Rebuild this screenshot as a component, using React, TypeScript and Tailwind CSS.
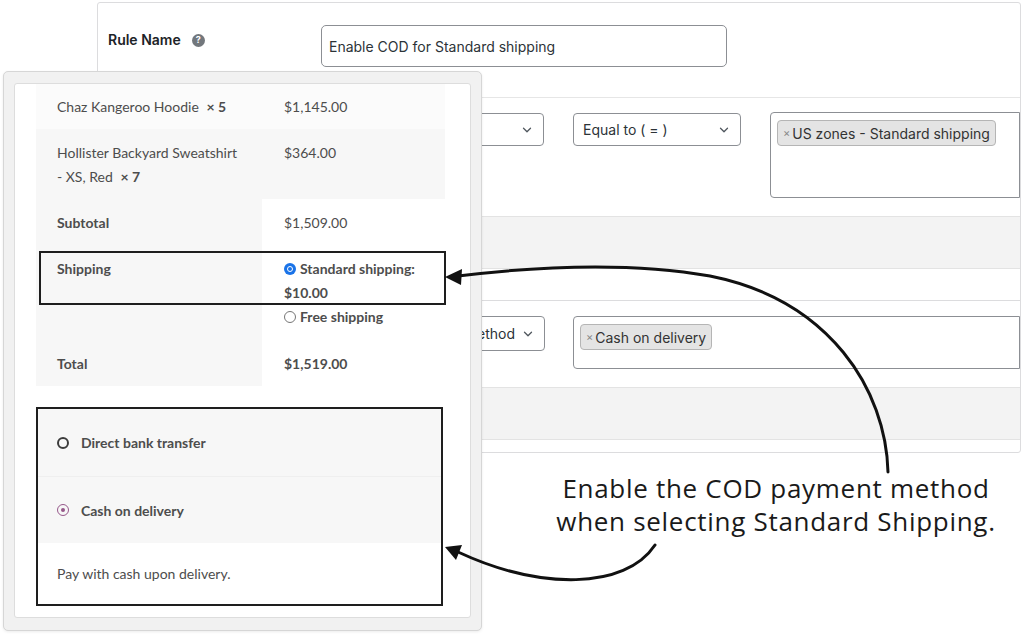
import React from "react";

const admin = { fontFamily: "Inter, 'Liberation Sans', sans-serif" };
const shop = { fontFamily: "Lato, 'Noto Sans', sans-serif" };

function Chevron() {
  return (
    <svg width="14" height="14" viewBox="0 0 24 24" fill="none" stroke="#50575e" strokeWidth="2.2" strokeLinecap="round" strokeLinejoin="round">
      <path d="M6 9l6 6 6-6" />
    </svg>
  );
}

function Select({ label, className, end }: { label: string; className: string; end?: boolean }) {
  return (
    <div className={`h-[33px] border border-[#8c8f94] rounded-[4px] bg-white flex items-center pl-[9px] pr-[9px] text-[14px] text-[#2c3338] ${end ? "justify-end gap-[6px]" : "justify-between"} ${className}`}>
      <span className="whitespace-nowrap">{label}</span>
      <Chevron />
    </div>
  );
}

function Tag({ label }: { label: string }) {
  return (
    <div className="inline-flex items-center h-[26px] px-[5px] bg-[#e4e4e4] border border-[#b5b5b5] rounded-[4px] text-[14px] text-[#333]">
      <span className="text-[11px] text-[#888] mr-[2px]">×</span>
      {label}
    </div>
  );
}

export default function App() {
  return (
    <div className="relative w-[1024px] h-[634px] bg-white overflow-hidden">
      {/* Background admin panel */}
      <div className="pt-[2px] pl-[97px]" style={admin}>
        <div className="w-[924px] h-[451px] border border-[#dcdcde] rounded-[3px] flex flex-col bg-white">
          {/* Rule name row */}
          <div className="h-[95px] flex items-start pt-[22px] pl-[10px] border-b border-[#e6e6e6]">
            <div className="w-[213px] mt-[6px] flex items-center gap-[11px] text-[14px] leading-[18px] font-semibold text-[#1d2327]">
              Rule Name
              <span className="w-[13px] h-[13px] rounded-full bg-[#72777c] text-white text-[9px] font-bold flex items-center justify-center">?</span>
            </div>
            <div className="w-[406px] h-[42px] border border-[#8c8f94] rounded-[5px] flex items-center pl-[7px] text-[14px] text-[#2c3338]">
              Enable COD for Standard shipping
            </div>
          </div>
          {/* Condition row */}
          <div className="h-[118px] flex items-start pt-[15px] pl-[246px]">
            <Select label="Shipping method" className="w-[200px]" />
            <Select label="Equal to ( = )" className="w-[168px] ml-[29px]" />
            <div className="flex-1 h-[86px] -mt-[1px] ml-[29px] border border-[#8c8f94] rounded-l-[4px] pt-[6px] pl-[6px]">
              <Tag label="US zones - Standard shipping" />
            </div>
          </div>
          <div className="h-[53px] bg-[#f3f3f3] border-y border-[#e3e3e3]" />
          <div className="h-[32px] border-b border-[#dcdcde]" />
          {/* Payment row */}
          <div className="h-[86px] flex items-start pt-[15px] pl-[266px]">
            <Select label="Payment method" className="w-[181px] h-[35px]" end />
            <div className="flex-1 h-[53px] ml-[28px] border border-[#8c8f94] rounded-l-[4px] pt-[6px] pl-[6px]">
              <Tag label="Cash on delivery" />
            </div>
          </div>
          <div className="h-[53px] bg-[#f3f3f3] border-y border-[#e3e3e3]" />
          <div className="flex-1" />
        </div>
      </div>

      {/* Checkout overlay card */}
      <div className="absolute left-[3px] top-[71px] w-[479px] h-[560px] bg-[#f1f1f1] border border-[#d6d6d6] rounded-[5px] shadow-[0_1px_3px_rgba(0,0,0,0.08)] pt-[11px] pl-[10px] pr-[10px] pb-[12px] flex" style={shop}>
        <div className="flex-1 bg-white border border-[#dddddd] rounded-[3px] overflow-hidden pl-[21px] text-[14px] text-[#4d4d4d]">
          <div className="w-[409px]">
            <div className="h-[45px] bg-[#fbfbfb] flex items-center">
              <div className="w-[226px] pl-[21px]">
                Chaz Kangeroo Hoodie <span className="font-bold ml-[4px]">× 5</span>
              </div>
              <div className="pl-[22px]">$1,145.00</div>
            </div>
            <div className="h-[70px] bg-[#f7f7f7] flex items-start pt-[12px] leading-6">
              <div className="w-[226px] pl-[21px]">
                <div>Hollister Backyard Sweatshirt</div>
                <div>
                  - XS, Red <span className="font-bold ml-[4px]">× 7</span>
                </div>
              </div>
              <div className="pl-[22px]">$364.00</div>
            </div>
            <div className="h-[47px] flex">
              <div className="w-[226px] pl-[21px] bg-[#f7f7f7] flex items-center font-bold">Subtotal</div>
              <div className="pl-[22px] flex items-center">$1,509.00</div>
            </div>
            <div className="h-[94px] flex leading-6">
              <div className="w-[226px] pl-[21px] pt-[11px] bg-[#f7f7f7] font-bold">Shipping</div>
              <div className="pl-[22px] pt-[11px] pr-[10px] font-bold flex-1">
                <div>
                  <span className="inline-block align-[-1px] w-[12px] h-[12px] rounded-full bg-[#1a73e8] mr-[4px] relative">
                    <span className="absolute left-[3px] top-[3px] w-[6px] h-[6px] rounded-full border-[1.5px] border-white" />
                  </span>
                  Standard shipping: $10.00
                </div>
                <div>
                  <span className="inline-block align-[-1px] w-[12px] h-[12px] rounded-full border border-[#767676] bg-white mr-[4px]" />
                  Free shipping
                </div>
              </div>
            </div>
            <div className="h-[46px] flex font-bold">
              <div className="w-[226px] pl-[21px] bg-[#f7f7f7] flex items-center">Total</div>
              <div className="pl-[22px] flex items-center">$1,519.00</div>
            </div>
          </div>

          {/* Payment methods */}
          <div className="mt-[21px] w-[407px] h-[199px] border-[2px] border-[#1e1e1e] flex flex-col">
            <div className="h-[68px] bg-[#f7f7f7] border-b border-[#efefef] flex items-center pl-[19px] font-bold">
              <span className="w-[12px] h-[12px] rounded-full border-[2px] border-[#3c3c3c] mr-[12px]" />
              Direct bank transfer
            </div>
            <div className="h-[66px] bg-[#f7f7f7] flex items-center pl-[19px] font-bold">
              <span className="w-[12px] h-[12px] rounded-full border-[1.5px] border-[#96588a] mr-[12px] flex items-center justify-center">
                <span className="w-[4px] h-[4px] rounded-full bg-[#96588a]" />
              </span>
              Cash on delivery
            </div>
            <div className="flex-1 flex items-center pl-[19px]">Pay with cash upon delivery.</div>
          </div>
        </div>

        {/* Shipping highlight box */}
        <div className="absolute left-[35px] top-[179px] w-[407px] h-[54px] border-[2px] border-[#1e1e1e]" />
      </div>

      {/* Annotation text */}
      <div className="absolute left-[536px] top-[472px] w-[480px] text-center text-[26px] tracking-[0.7px] leading-[33px] text-[#1a1a1a]" style={{ fontFamily: "'Open Sans', sans-serif" }}>
        Enable the COD payment method
        <br />
        when selecting Standard Shipping.
      </div>

      {/* Arrows */}
      <svg className="absolute inset-0 pointer-events-none" width="1024" height="634" viewBox="0 0 1024 634">
        <path d="M 888 472 C 886 390, 830 300, 710 276 C 630 262, 540 266, 458 276" fill="none" stroke="#111" strokeWidth="3" strokeLinecap="round" />
        <polygon points="445,277 462,269 461,285" fill="#111" />
        <path d="M 655 545 C 625 590, 540 590, 458 552" fill="none" stroke="#111" strokeWidth="3" strokeLinecap="round" />
        <polygon points="445,547 462,545 456,560" fill="#111" />
      </svg>
    </div>
  );
}
